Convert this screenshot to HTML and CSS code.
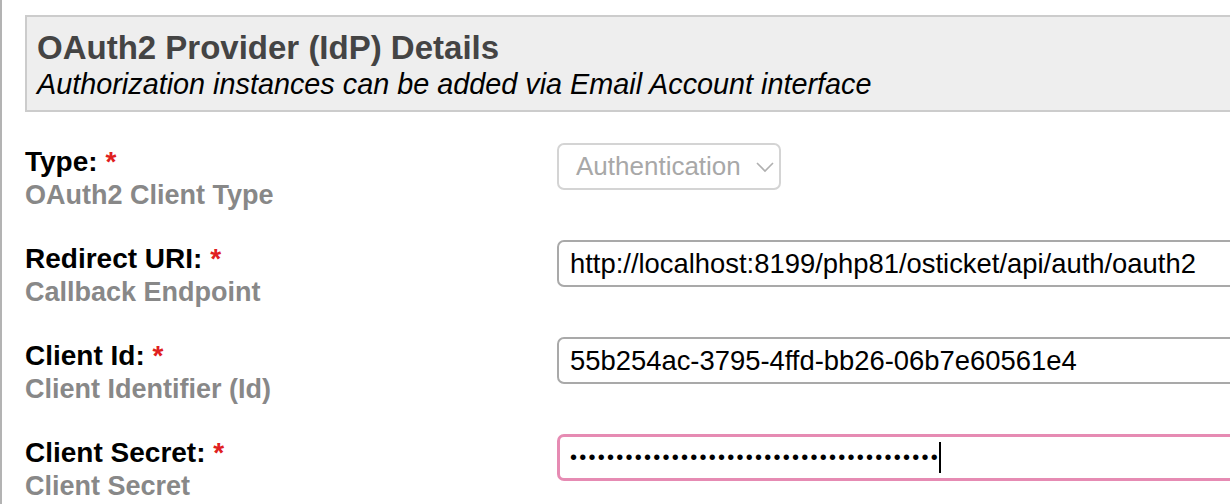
FILE: index.html
```html
<!DOCTYPE html>
<html>
<head>
<meta charset="utf-8">
<link rel="stylesheet" href="styles.css">
</head>
<body>
<div class="page">
  <div class="section-head">
    <div class="title">OAuth2 Provider (IdP) Details</div>
    <div class="subtitle">Authorization instances can be added via Email Account interface</div>
  </div>
  <div class="form">
    <div class="row">
      <div class="label">
        <div class="name">Type: <span class="req">*</span></div>
        <div class="hint">OAuth2 Client Type</div>
      </div>
      <div class="field">
        <div class="select">
          <span>Authentication</span>
          <svg class="chev" width="20" height="12" viewBox="0 0 20 12"><path d="M2 2 L10 10 L18 2" fill="none" stroke="#b0b0b0" stroke-width="1.6"/></svg>
        </div>
      </div>
    </div>
    <div class="row">
      <div class="label">
        <div class="name">Redirect URI: <span class="req">*</span></div>
        <div class="hint">Callback Endpoint</div>
      </div>
      <div class="field">
        <div class="input">http://localhost:8199/php81/osticket/api/auth/oauth2</div>
      </div>
    </div>
    <div class="row">
      <div class="label">
        <div class="name">Client Id: <span class="req">*</span></div>
        <div class="hint">Client Identifier (Id)</div>
      </div>
      <div class="field">
        <div class="input">55b254ac-3795-4ffd-bb26-06b7e60561e4</div>
      </div>
    </div>
    <div class="row">
      <div class="label">
        <div class="name">Client Secret: <span class="req">*</span></div>
        <div class="hint">Client Secret</div>
      </div>
      <div class="field">
        <div class="input focus"><span class="dots">••••••••••••••••••••••••••••••••••••••••</span><span class="caret"></span></div>
      </div>
    </div>
  </div>
</div>
</body>
</html>
```

FILE: styles.css
```css
html, body {
  margin: 0;
  padding: 0;
  background: #fff;
  overflow: hidden;
}
body {
  font-family: "Liberation Sans", Arial, sans-serif;
  width: 1230px;
  height: 504px;
}
.page {
  border-left: 2px solid #b3b3b3;
  height: 504px;
  padding-left: 23px;
  padding-top: 15px;
  box-sizing: border-box;
}
.section-head {
  background: #eeeeee;
  border: 2px solid #cccccc;
  border-right: none;
  height: 97px;
  box-sizing: border-box;
  padding: 12px 0 0 10px;
  margin-right: -10px;
}
.title {
  font-size: 33px;
  font-weight: bold;
  color: #444;
  line-height: 38px;
}
.subtitle {
  font-size: 28.8px;
  font-style: italic;
  color: #000;
  line-height: 34px;
}
.form {
  display: flex;
  flex-direction: column;
  gap: 26px;
  margin-top: 31px;
}
.row {
  display: grid;
  grid-template-columns: 532px 1fr;
  height: 71px;
}
.label {
  padding-top: 2px;
}
.name {
  font-size: 28px;
  font-weight: bold;
  color: #000;
  line-height: 33px;
}
.req {
  color: #e02020;
}
.hint {
  font-size: 27px;
  font-weight: bold;
  color: #888;
  line-height: 34px;
}
.field {
  display: flex;
}
.select {
  width: 224px;
  height: 47px;
  box-sizing: border-box;
  border: 2px solid #d4d4d4;
  border-radius: 7px;
  display: flex;
  align-items: center;
  padding: 0 0 0 17px;
  font-size: 26px;
  color: #a8a8a8;
  gap: 14px;
}
.input {
  flex: 1;
  margin-right: -20px;
  height: 47px;
  box-sizing: border-box;
  border: 2px solid #a9a9a9;
  border-radius: 7px;
  display: flex;
  align-items: center;
  padding-left: 11px;
  font-size: 27.4px;
  color: #000;
  white-space: nowrap;
}
.input.focus {
  border: 3px solid #e68bb3;
  padding-left: 10px;
}
.dots {
  font-size: 20px;
  letter-spacing: 2.25px;
}
.caret {
  width: 2px;
  height: 31px;
  background: #000;
  margin-left: -1px;
}
```
